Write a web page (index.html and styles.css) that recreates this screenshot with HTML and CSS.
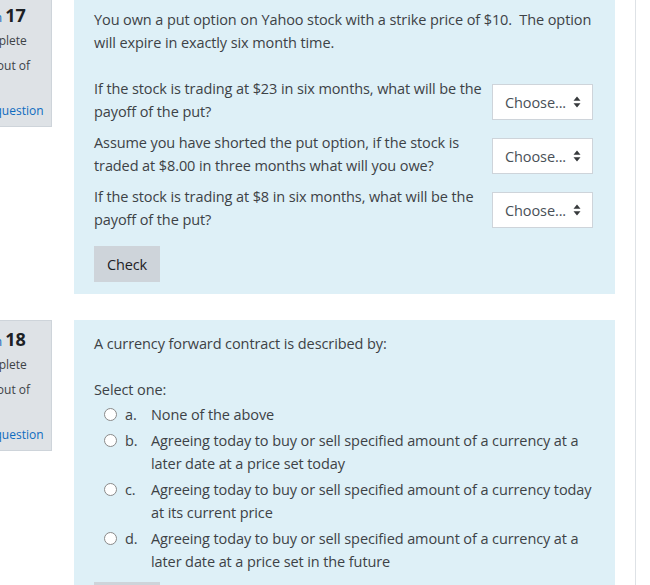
FILE: index.html
```html
<!DOCTYPE html>
<html>
<head>
<meta charset="utf-8">
<link rel="stylesheet" href="styles.css">
</head>
<body>
<div class="page">
  <div class="main">
    <div class="que first">
      <div class="info">
        <h3 class="no"><span class="ql">Question</span> <span class="qno">17</span></h3>
        <div class="state">Not complete</div>
        <div class="grade">Marked out of<br>3.00</div>
        <div class="flag"><svg class="flagicon" width="14" height="14" viewBox="0 0 14 14"><path d="M2 1v12M2 2h9l-2 3 2 3H2" fill="none" stroke="#0f6cbf" stroke-width="1.4"/></svg>Flag question</div>
      </div>
      <div class="content">
        <div class="formulation">
          <p class="qtext">You own a put option on Yahoo stock with a strike price of $10.&nbsp; The option will expire in exactly six month time.</p>
          <div class="matches">
            <div class="mrow">
              <div class="mtext">If the stock is trading at $23 in six months, what will be the payoff of the put?</div>
              <div class="select"><span>Choose...</span><svg class="arr" width="8" height="12" viewBox="0 0 8 12"><path d="M4 0.5L7.5 4.8H0.5Z M4 11.5L7.5 7.2H0.5Z" fill="#373a3c"/></svg></div>
            </div>
            <div class="mrow">
              <div class="mtext">Assume you have shorted the put option, if the stock is traded at $8.00 in three months what will you owe?</div>
              <div class="select"><span>Choose...</span><svg class="arr" width="8" height="12" viewBox="0 0 8 12"><path d="M4 0.5L7.5 4.8H0.5Z M4 11.5L7.5 7.2H0.5Z" fill="#373a3c"/></svg></div>
            </div>
            <div class="mrow">
              <div class="mtext">If the stock is trading at $8 in six months, what will be the payoff of the put?</div>
              <div class="select"><span>Choose...</span><svg class="arr" width="8" height="12" viewBox="0 0 8 12"><path d="M4 0.5L7.5 4.8H0.5Z M4 11.5L7.5 7.2H0.5Z" fill="#373a3c"/></svg></div>
            </div>
          </div>
          <button class="check">Check</button>
        </div>
      </div>
    </div>

    <div class="que">
      <div class="info">
        <h3 class="no"><span class="ql">Question</span> <span class="qno">18</span></h3>
        <div class="state">Not complete</div>
        <div class="grade">Marked out of<br>1.00</div>
        <div class="flag"><svg class="flagicon" width="14" height="14" viewBox="0 0 14 14"><path d="M2 1v12M2 2h9l-2 3 2 3H2" fill="none" stroke="#0f6cbf" stroke-width="1.4"/></svg>Flag question</div>
      </div>
      <div class="content">
        <div class="formulation">
          <p class="qtext">A currency forward contract is described by:</p>
          <div class="prompt">Select one:</div>
          <div class="options">
            <div class="opt"><span class="radio"></span><span class="letter">a.</span><span class="otext">None of the above</span></div>
            <div class="opt"><span class="radio"></span><span class="letter">b.</span><span class="otext">Agreeing today to buy or sell specified amount of a currency at a later date at a price set today</span></div>
            <div class="opt"><span class="radio"></span><span class="letter">c.</span><span class="otext">Agreeing today to buy or sell specified amount of a currency today at its current price</span></div>
            <div class="opt"><span class="radio"></span><span class="letter">d.</span><span class="otext">Agreeing today to buy or sell specified amount of a currency at a later date at a price set in the future</span></div>
          </div>
          <button class="check check2">Check</button>
        </div>
      </div>
    </div>
  </div>
  <div class="side"></div>
</div>
</body>
</html>
```

FILE: styles.css
```css
* { box-sizing: border-box; }
html, body { margin: 0; padding: 0; background: #fff; }
body {
  font-family: "Open Sans", "Noto Sans", sans-serif;
  font-size: 14.5px;
  letter-spacing: -0.1px;
  line-height: 23px;
  color: #3d4246;
  overflow: hidden;
  width: 650px;
  height: 585px;
}
.page { display: flex; width: 650px; height: 585px; overflow: hidden; }
.main {
  width: 636px;
  flex: 0 0 636px;
  border-right: 1px solid #dee2e6;
  overflow: hidden;
}
.que { display: flex; align-items: flex-start; margin-bottom: 26px; }
.que.first { margin-top: -4px; }

.info {
  flex: 0 0 109px;
  width: 109px;
  margin-left: -57px;
  margin-right: 22px;
  padding: 6px 6px 4px 7px;
  background: #dee2e6;
  border: 1px solid #ced4da;
  font-size: 12px;
  letter-spacing: 0;
  line-height: 22px;
  color: #3d4246;
  white-space: nowrap;
}
.info .no { margin: 0; font-size: 12px; line-height: 24px; font-weight: normal; }
.info .ql { color: #0f6cbf; }
.info .qno { font-size: 18px; font-weight: bold; color: #1d2125; }
.info .grade { margin-top: 3px; }
.info .flag { margin-top: 1px; color: #0f6cbf; display: flex; align-items: center; }
.flagicon { flex: 0 0 14px; margin-right: 4px; }

.content { flex: 0 0 541px; width: 541px; }
.formulation {
  background: #def0f7;
  padding: 12px 20px 12px 20px;
}
.qtext { margin: 0 -8px 0 0; }
.matches { margin-top: 23px; display: flex; flex-direction: column; gap: 8px; }
.mrow { display: flex; align-items: center; }
.mtext { width: 396px; flex: 0 0 396px; }
.select {
  margin-left: 2px;
  margin-top: 4px;
  width: 101px;
  height: 36px;
  background: #fff;
  border: 1px solid #ced4da;
  display: flex;
  align-items: center;
  justify-content: space-between;
  padding: 0 11px 0 12px;
  color: #495057;
}
.arr { display: block; }
.check {
  display: block;
  margin-top: 15px;
  height: 36px;
  width: 66px;
  padding: 0;
  border: none;
  background: #ced4da;
  color: #1d2125;
  font-family: inherit;
  font-size: 14.5px;
  letter-spacing: -0.1px;
}
.prompt { margin-top: 23px; }
.options { margin: 0 -8px 0 0; }
.opt { display: flex; align-items: flex-start; padding: 1.5px 0 1.5px 10px; }
.radio {
  flex: 0 0 13px;
  width: 13px;
  height: 13px;
  margin-top: 5px;
  border: 1px solid #8a8a8a;
  border-radius: 50%;
  background: #fff;
}
.letter { flex: 0 0 34px; padding-left: 8px; }
.otext { flex: 1; }
.check2 { margin-top: 8px; }
.side { flex: 1; }
```
